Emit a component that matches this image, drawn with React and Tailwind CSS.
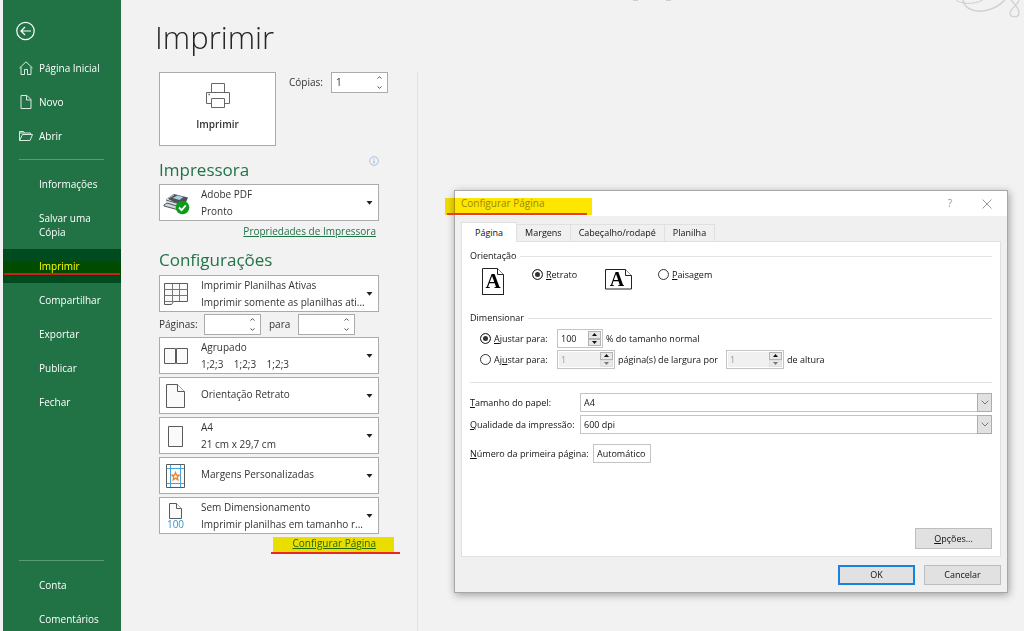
import { useState } from "react"
import clsx from "clsx"


const Spinner = ({ id, label, value, className }) => {
    const [number, setNumber] = useState(value)

    return (
        <div className={clsx("flex h-[21px] w-[57px] shrink-0 border border-[#ababab] bg-white", className)}>
            <input id={id} aria-label={label} value={number} onChange={(e) => setNumber(e.target.value)} className="w-full min-w-0 pl-1 outline-none" />
            <div className="flex w-4 shrink-0 flex-col">
                <button type="button" aria-label="Aumentar" onClick={() => setNumber(Number(number) + 1)} className="flex flex-1 items-center justify-center">
                    <svg width="5" height="3" viewBox="0 0 5 3" fill="none" stroke="#555"><path d="M.5 2.5 2.5.7l2 1.8" /></svg>
                </button>
                <button type="button" aria-label="Diminuir" onClick={() => setNumber(Number(number) - 1)} className="flex flex-1 items-center justify-center">
                    <svg width="5" height="3" viewBox="0 0 5 3" fill="none" stroke="#555"><path d="M.5.5l2 1.8 2-1.8" /></svg>
                </button>
            </div>
        </div>
    )
}

const DialogSpinner = ({ label, value, disabled, className }) => {
    const [number, setNumber] = useState(value)

    return (
        <div className={clsx("flex h-[19px] shrink-0 border border-[#c3c3c8] bg-white p-px", className)}>
            <input aria-label={label} value={number} disabled={disabled} onChange={(e) => setNumber(e.target.value)} className="w-full min-w-0 pl-[2px] outline-none disabled:bg-[#f0f0f0] disabled:text-[#999]" />
            <div className="flex w-[13px] shrink-0 flex-col">
                <button type="button" aria-label="Aumentar" disabled={disabled} onClick={() => setNumber(Number(number) + 1)} className="flex flex-1 items-center justify-center border border-[#b4b4b4] bg-[#e8e8e8]">
                    <svg width="5" height="3" viewBox="0 0 5 3"><path d="M0 3 2.500 0 5 3z" fill="#111" /></svg>
                </button>
                <button type="button" aria-label="Diminuir" disabled={disabled} onClick={() => setNumber(Number(number) - 1)} className={clsx("flex flex-1 items-center justify-center border bg-[#e8e8e8]", disabled ? "border-[#e0e0e0]" : "border-[#b4b4b4]")}>
                    <svg width="5" height="3" viewBox="0 0 5 3"><path d="M0 0h5L2.500 3z" fill={disabled ? "#777" : "#111"} /></svg>
                </button>
            </div>
        </div>
    )
}

const Option = ({ icon, title, detail }) => (
    <button type="button" aria-haspopup="listbox" className="flex h-[37px] w-[220px] shrink-0 items-center border border-[#ababab] bg-white pr-[5px] text-left">
        <span className="flex w-[41px] shrink-0 pl-[3px]">{icon}</span>
        <span className={clsx("min-w-0 flex-1 whitespace-pre leading-[17px]", !detail && "pb-[2px]")}>
            <span className="block">{title}</span>
            {detail && <span className="block">{detail}</span>}
        </span>
        <svg className="ml-px shrink-0" width="7" height="4" viewBox="0 0 7 4"><path d="M.5 0h6L3.500 3.700z" fill="#222" /></svg>
    </button>
)

const PdfIcon = () => (
    <svg width="27" height="26" viewBox="0 0 27 26">
        <path d="M4 8.500 11 4l14 3.500-3 7-4 1z" fill="#4a5157" />
        <path d="M9.500 8l5-2.500 6 1.500-4 3z" fill="#a9cbe6" />
        <path d="M3 9.500l8-4.500" stroke="#b9c0c6" />
        <path d="M3 10l13 3.500v4L3 13z" fill="#e1e4e7" />
        <path d="M3 10l12 3.500M1 15l3-2 10 3v3.500L1 16z" stroke="#50575d" fill="#cfd4d8" />
        <circle cx="19.500" cy="17.500" r="6.800" fill="#0f9a1c" />
        <path d="M16 17.500l2.600 2.600 4.200-4.700" stroke="#fff" strokeWidth="1.800" fill="none" />
    </svg>
)

const SheetsIcon = () => (
    <svg width="26" height="26" viewBox="0 0 26 26" fill="#fafafa" stroke="#5a5a5a">
        <path d="M1.500 2.500h23v18H10.500l-2 3h-7z" />
        <path d="M1.500 8.500h23M1.500 14.500h23M1.500 20.500h10M9.500 2.500v18M16.500 2.500v18" fill="none" stroke="#777" />
    </svg>
)

const CollateIcon = () => (
    <svg width="26" height="26" viewBox="0 0 26 26" fill="#fafafa" stroke="#5a5a5a">
        <path d="M1.500 5.500h11v15h-11zM13.500 5.500h11v15h-11z" />
    </svg>
)

const PortraitIcon = () => (
    <svg width="26" height="26" viewBox="0 0 26 26" fill="#fafafa" stroke="#5a5a5a">
        <path d="M3.500 1.500h11l7 7v16h-18z" />
        <path d="M14.500 1.500v7h7" />
    </svg>
)

const PaperIcon = () => (
    <svg width="26" height="26" viewBox="0 0 26 26" fill="#fafafa" stroke="#5a5a5a">
        <path d="M5.500 3.500h14v20h-14z" />
    </svg>
)

const MarginsIcon = () => (
    <svg width="26" height="26" viewBox="0 0 26 26" fill="none">
        <path d="M3.500 1.500h18v23h-18z" fill="#fafafa" stroke="#5a5a5a" />
        <path d="M7.500 2v22M17.500 2v22M4 5.500h17M4 20.500h17" stroke="#41a5e1" />
        <path d="M12.500 9.500l1 2.700h2.800l-2.200 1.800.8 2.800-2.400-1.600-2.400 1.600.8-2.800-2.200-1.800h2.800z" stroke="#e8812b" strokeWidth="1.200" />
    </svg>
)

const ScaleIcon = () => (
    <span className="flex w-[25px] flex-col items-center leading-[10px] text-[#2b94d6]">
        <svg width="13" height="16" viewBox="0 0 13 16" fill="#fafafa" stroke="#5a5a5a">
            <path d="M.5.500h7l5 5v10H.500z" />
            <path d="M7.500.500v5h5" />
        </svg>
        100
    </span>
)

const NavItem = ({ icon, children, active }) => (
    <a href="#" aria-current={active ? "page" : undefined} className={clsx("relative flex min-h-[34px] items-center pr-3 leading-[14px]", active && "bg-[#004b1e]")}>
        <span className="flex w-9 shrink-0 pl-4">{icon}</span>
        <span className="py-[10px]">{children}</span>
        {active && <span className="absolute inset-x-0 top-[13px] h-[14px] bg-[#ffff00] mix-blend-multiply"></span>}
        {active && <span className="absolute inset-x-px top-[24px] h-[2px] bg-[#c8201a]"></span>}
    </a>
)

const Sidebar = () => (
    <nav className="flex w-[118px] shrink-0 flex-col bg-[#217346] text-white">
        <button type="button" aria-label="Voltar" className="mb-[10px] ml-[13px] mt-[21px] w-5">
            <svg width="20" height="20" viewBox="0 0 20 20" fill="none" stroke="#fff">
                <circle cx="9.500" cy="10" r="8.700" strokeWidth="1.200" />
                <path d="M15 10H5M9 6l-4 4 4 4" strokeWidth="1.200" />
            </svg>
        </button>
        <NavItem icon={<svg width="14" height="14" viewBox="0 0 14 14" fill="none" stroke="#dcebe2"><path d="M.5 7 7 .8 13.500 7M2 6v7.500h3.500v-5h3v5H12V6" /></svg>}>Página Inicial</NavItem>
        <NavItem icon={<svg width="14" height="14" viewBox="0 0 14 14" fill="none" stroke="#dcebe2"><path d="M2 .500h6l4 4v9H2zM7.500.500V5H12" /></svg>}>Novo</NavItem>
        <NavItem icon={<svg width="14" height="14" viewBox="0 0 14 14" fill="none" stroke="#dcebe2"><path d="M.5 11.500v-9h4l1 1.500h6v2M.5 11.500l3-6h10l-2.500 6zM.5 4h5" /></svg>}>Abrir</NavItem>
        <hr className="mb-[7px] ml-4 mr-[17px] mt-[6px] border-[#5a9a77]" />
        <NavItem>Informações</NavItem>
        <NavItem>Salvar uma<br />Cópia</NavItem>
        <NavItem active>Imprimir</NavItem>
        <NavItem>Compartilhar</NavItem>
        <NavItem>Exportar</NavItem>
        <NavItem>Publicar</NavItem>
        <NavItem>Fechar</NavItem>
        <div className="mt-auto flex flex-col gap-5 pb-[5px] pl-9 leading-[14px]">
            <hr className="-ml-5 mr-[17px] -mb-[3px] border-[#5a9a77]" />
            <a href="#">Conta</a>
            <a href="#">Comentários</a>
        </div>
    </nav>
)

const PrintSettings = () => (
    <main className="flex w-[258px] shrink-0 flex-col text-[#333]">
        <h1 className="-ml-1 mb-3 mt-[14px] text-[31px] font-light leading-[46px] text-[#262626]">Imprimir</h1>
        <div className="flex items-start">
            <button type="button" className="flex h-[74px] w-[117px] flex-col items-center border border-[#ababab] bg-white pt-[10px] font-semibold">
                <svg className="mb-2" width="26" height="26" viewBox="0 0 26 26" fill="none" stroke="#666">
                    <path d="M6.500 9.500v-9h13v9M6.500 20.500h-5v-11h23v11h-5M6.500 15.500h13v9h-13z" />
                    <path d="M3.500 11.500h1.500" strokeWidth="1.500" />
                </svg>
                Imprimir
            </button>
            <label htmlFor="copias" className="ml-[13px] w-[42px] leading-[21px]">Cópias:</label>
            <Spinner id="copias" value="1" />
        </div>

        <div className="mt-[9px] flex w-[220px] items-start justify-between">
            <h2 className="pt-[3px] text-[17px] leading-[24px] text-[#217346]">Impressora</h2>
            <svg width="10" height="12" viewBox="0 0 10 12" fill="none" stroke="#8fb0d8">
                <circle cx="5" cy="6" r="4.300" stroke="#a9c1e0" />
                <path d="M5 5.500V8.500M5 3.500v1" />
            </svg>
        </div>
        <div className="mt-[2px]"><Option icon={<PdfIcon />} title="Adobe PDF" detail="Pronto" /></div>
        <a href="#" className="mr-[41px] mt-[2px] self-end leading-4 text-[#217346] underline">Propriedades de Impressora</a>

        <h2 className="mb-[3px] mt-[9px] text-[17px] leading-[24px] text-[#217346]">Configurações</h2>
        <Option icon={<SheetsIcon />} title="Imprimir Planilhas Ativas" detail="Imprimir somente as planilhas ati..." />
        <div className="my-[2px] flex items-center">
            <label htmlFor="de" className="w-[45px]">Páginas:</label>
            <Spinner id="de" value="" />
            <label htmlFor="ate" className="w-[37px] pl-2">para</label>
            <Spinner id="ate" value="" />
        </div>
        <div className="flex flex-col gap-[3px]">
            <Option icon={<CollateIcon />} title="Agrupado" detail="1;2;3    1;2;3    1;2;3" />
            <Option icon={<PortraitIcon />} title="Orientação Retrato" />
            <Option icon={<PaperIcon />} title="A4" detail="21 cm x 29,7 cm" />
            <Option icon={<MarginsIcon />} title="Margens Personalizadas" />
            <Option icon={<ScaleIcon />} title="Sem Dimensionamento" detail="Imprimir planilhas em tamanho r..." />
        </div>
        <div className="relative mr-[41px] mt-px self-end leading-4">
            <a href="#" className="text-[#217346] underline">Configurar Página</a>
            <span className="pointer-events-none absolute -left-5 -right-[18px] top-[2px] h-4 bg-[#f7ea00] mix-blend-multiply"></span>
            <span className="pointer-events-none absolute -left-[22px] -right-6 top-[17px] h-[2px] bg-[#e8281e]"></span>
        </div>
    </main>
)

const tabs = ["Página", "Margens", "Cabeçalho/rodapé", "Planilha"]

const GroupTitle = ({ children }) => (
    <div className="flex items-center gap-1 leading-[14px]">
        {children}
        <hr className="flex-1 border-[#e3e3e3]" />
    </div>
)

const radioStyle = "size-[11px] shrink-0 appearance-none rounded-full border border-[#333] bg-white checked:bg-[#333] checked:shadow-[inset_0_0_0_2px_white]"

const DialogSelect = ({ id, value }) => (
    <div className="grid flex-1">
        <select id={id} defaultValue={value} className="col-start-1 row-start-1 h-[19px] appearance-none border border-[#c3c3c8] bg-white pl-[3px] outline-none">
            <option>{value}</option>
        </select>
        <span className="pointer-events-none col-start-1 row-start-1 flex w-[15px] items-center justify-center justify-self-end border border-[#adadad] bg-[#e1e1e1]">
            <svg width="8" height="5" viewBox="0 0 8 5" fill="none" stroke="#777"><path d="M.7.700 4 4 7.300.700" /></svg>
        </span>
    </div>
)

const PageSetup = () => {
    const [tab, setTab] = useState("Página")
    const [orientation, setOrientation] = useState("retrato")
    const [scale, setScale] = useState("porcentagem")

    return (
        <div role="dialog" aria-labelledby="titulo" className="relative flex min-h-[403px] flex-1 flex-col whitespace-nowrap border border-[#a8a8a8] bg-[#f0f0f0] text-[9px] text-[#111] shadow-[1px_2px_8px_rgba(0,0,0,0.35)]">
            <div className="flex h-[25px] items-center bg-white pl-[6px] pr-[15px] text-[10px] text-[#999]">
                <h2 id="titulo" className="flex-1">Configurar Página</h2>
                <button type="button" aria-label="Ajuda" className="mr-[30px]">?</button>
                <button type="button" aria-label="Fechar">
                    <svg width="10" height="10" viewBox="0 0 10 10" stroke="#999"><path d="M.5.500l9 9M9.500.500l-9 9" /></svg>
                </button>
            </div>
            <span className="pointer-events-none absolute -left-[10px] top-[7px] h-[17px] w-[147px] bg-[#ffe600] mix-blend-multiply"></span>
            <span className="pointer-events-none absolute -left-2 top-[22px] h-[2px] w-[140px] bg-[#f03c1e]"></span>

            <div role="tablist" className="flex items-end pl-[6px] pt-[6px]">
                {tabs.map((name) => (
                    <button
                        key={name}
                        type="button"
                        role="tab"
                        aria-selected={name === tab}
                        onClick={() => setTab(name)}
                        className={clsx("border border-b-0 border-[#e0e0e0]", name === tab ? "relative -mb-px h-5 bg-white px-[13px]" : "h-[17px] border-l-0 px-2")}
                    >
                        {name}
                    </button>
                ))}
            </div>

            <div role="tabpanel" className="mx-[6px] flex flex-1 flex-col border border-[#e0e0e0] bg-white px-2 pb-[7px] pt-[7px]">
                <GroupTitle>Orientação</GroupTitle>
                <div className="flex h-[33px] items-center pl-3">
                    <svg className="mt-[5px]" width="22" height="28" viewBox="0 0 22 28" fill="#fff" stroke="#222">
                        <path d="M.5.500h15l6 6v20H.500z" />
                        <path d="M15.500.500v6h6M0 26.500h22" />
                        <text x="11" y="20" textAnchor="middle" fontFamily="Liberation Serif" fontWeight="bold" fontSize="21" fill="#000" stroke="none">A</text>
                    </svg>
                    <label className="-mt-[10px] ml-7 flex w-[73px] items-center gap-[3px]">
                        <input type="radio" name="orientacao" checked={orientation === "retrato"} onChange={() => setOrientation("retrato")} className={radioStyle} />
                        <span><u>R</u>etrato</span>
                    </label>
                    <svg className="overflow-visible" width="27" height="21" viewBox="0 0 27 21" fill="#fff" stroke="#222">
                        <path d="M.5.500h20l6 6v13.500H.500z" />
                        <path d="M20.500.500v6h6" />
                        <text x="12" y="17" textAnchor="middle" fontFamily="Liberation Serif" fontWeight="bold" fontSize="20" fill="#000" stroke="none">A</text>
                    </svg>
                    <label className="-mt-[10px] ml-[26px] flex items-center gap-[3px]">
                        <input type="radio" name="orientacao" checked={orientation === "paisagem"} onChange={() => setOrientation("paisagem")} className={radioStyle} />
                        <span><u>P</u>aisagem</span>
                    </label>
                </div>

                <div className="mt-[15px]"><GroupTitle>Dimensionar</GroupTitle></div>
                <div className="mt-[4px] flex items-center pl-[10px]">
                    <label className="flex w-[77px] items-center gap-[3px]">
                        <input type="radio" name="escala" checked={scale === "porcentagem"} onChange={() => setScale("porcentagem")} className={radioStyle} />
                        <span><u>A</u>justar para:</span>
                    </label>
                    <DialogSpinner label="Porcentagem" value="100" className="w-[46px]" />
                    <span className="ml-[3px]">% do tamanho normal</span>
                </div>
                <div className="mt-[2px] flex items-center pl-[10px]">
                    <label className="flex w-[77px] items-center gap-[3px]">
                        <input type="radio" name="escala" checked={scale === "paginas"} onChange={() => setScale("paginas")} className={radioStyle} />
                        <span>Aj<u>u</u>star para:</span>
                    </label>
                    <DialogSpinner label="Páginas de largura" value="1" disabled={scale !== "paginas"} className="w-[58px]" />
                    <span className="ml-[3px] w-[108px]">página(s) de largura por</span>
                    <DialogSpinner label="Páginas de altura" value="1" disabled={scale !== "paginas"} className="w-[58px]" />
                    <span className="ml-[3px]">de altura</span>
                </div>

                <hr className="mb-[10px] mt-[13px] border-[#e3e3e3]" />
                <div className="flex items-center">
                    <label htmlFor="papel" className="w-[110px]"><u>T</u>amanho do papel:</label>
                    <DialogSelect id="papel" value="A4" />
                </div>
                <div className="mt-[3px] flex items-center">
                    <label htmlFor="qualidade" className="w-[110px]"><u>Q</u>ualidade da impressão:</label>
                    <DialogSelect id="qualidade" value="600 dpi" />
                </div>
                <div className="mt-[10px] flex items-center">
                    <label htmlFor="primeira" className="w-[123px]"><u>N</u>úmero da primeira página:</label>
                    <input id="primeira" defaultValue="Automático" className="h-[19px] w-[58px] border border-[#c3c3c8] pl-[3px] outline-none" />
                </div>
                <button type="button" className="mt-auto h-[21px] w-[77px] self-end border border-[#bdbdbd] bg-[#e1e1e1]"><u>O</u>pções...</button>
            </div>

            <div className="flex justify-end gap-[9px] px-[6px] pb-[7px] pt-2">
                <button type="button" className="h-5 w-[77px] border-2 border-[#1b82dc] bg-[#e1e1e1]">OK</button>
                <button type="button" className="h-5 w-[77px] border border-[#bdbdbd] bg-[#e1e1e1]">Cancelar</button>
            </div>
        </div>
    )
}

const App = () => {
    return (
        <div className="relative flex min-h-screen overflow-hidden bg-[#f2f2f2] pl-[3px] font-['Open_Sans','Noto_Sans',sans-serif] text-[10px]">
            <Sidebar />
            <div className="w-[38px] shrink-0"></div>
            <PrintSettings />
            <div className="mt-[72px] flex flex-1 items-start border-l border-[#e1e1e1] pl-9 pr-4 pt-[118px]">
                <PageSetup />
            </div>
            <svg className="pointer-events-none absolute right-0 top-0" width="424" height="20" viewBox="0 0 424 20" fill="none" stroke="#cfcfcf">
                <path d="M33 .500h5M66 .500h5" />
                <path d="M356 0c5 4 17 5 27 0" />
                <path d="M363 0c1 8 10 12 20 11 9-1 17-6 22-11" strokeWidth="1.500" />
                <path d="M411 0c4 4 8 9 8 13 0 5-9 5-9 0 0-4 8-8 9-13" strokeWidth="1.200" />
            </svg>
        </div>
    )
}

export default App
